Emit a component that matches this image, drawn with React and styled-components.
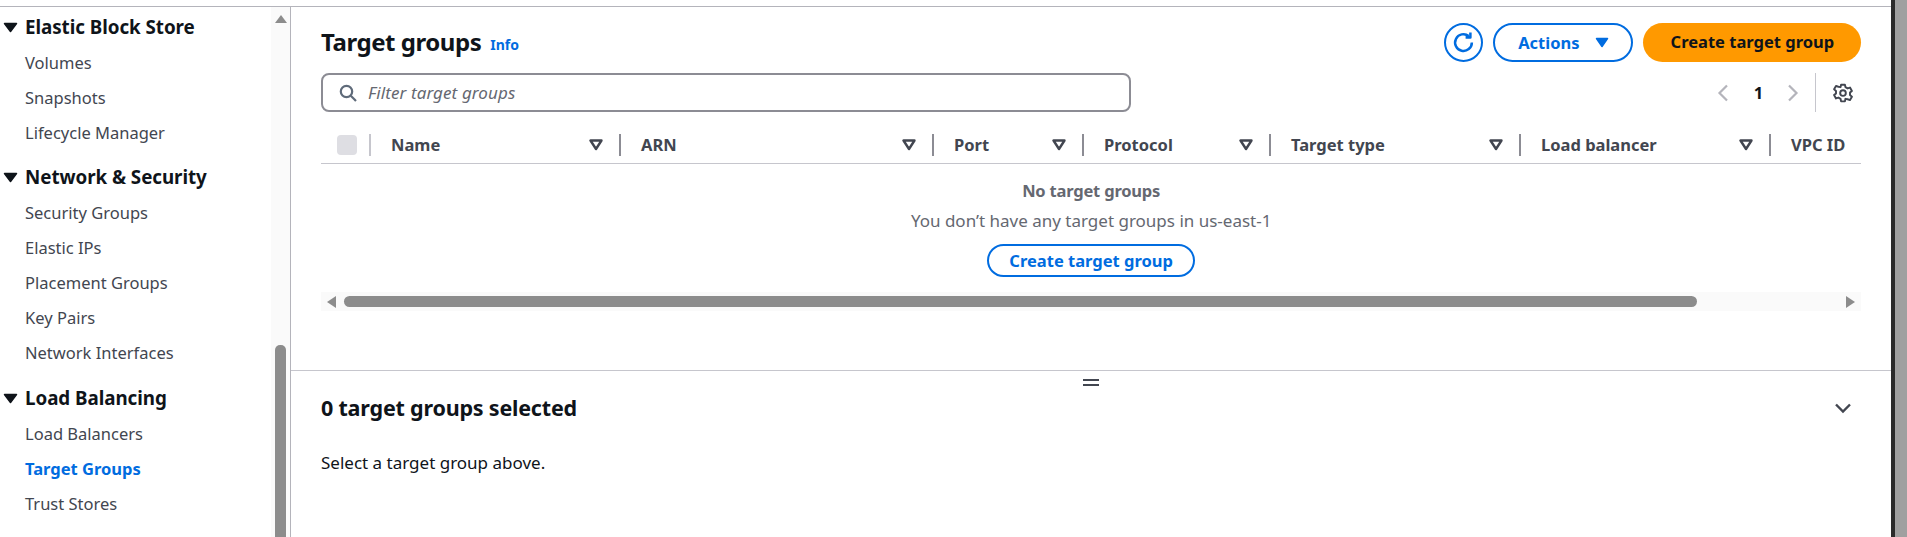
import React from "react";
import styled, { createGlobalStyle } from "styled-components";

const Global = createGlobalStyle`
  html, body { margin: 0; padding: 0; background: #fff; overflow: hidden; }
  * { box-sizing: border-box; }
  body { font-family: "Noto Sans", "Open Sans", Arial, sans-serif; color: #0f141a; }
`;

const Page = styled.div`
  display: flex;
  width: 1907px;
  height: 537px;
  overflow: hidden;
`;
const Workspace = styled.div`
  flex: 1;
  display: flex;
  flex-direction: column;
  padding-top: 6px;
`;
const Body = styled.div`
  flex: 1;
  display: flex;
  min-height: 0;
  border-top: 1px solid #b4b4bb;
`;
const WindowEdge = styled.div`
  width: 16px;
  background: #a0a0a0;
  border-left: 4px solid #2b2b2b;
`;

const Sidebar = styled.nav`
  width: 291px;
  flex: none;
  display: flex;
  border-right: 1px solid #b4b4bb;
`;
const NavList = styled.div`
  flex: 1;
  overflow: hidden;
`;
const NavHeading = styled.div`
  display: flex;
  align-items: center;
  height: 36px;
  margin-top: ${(p) => p.$gap}px;
  padding-left: 3px;
  font-size: 18.8px;
  font-weight: 700;
  letter-spacing: -0.05px;
  color: #0f141a;
  svg { margin-right: 7px; }
`;
const NavItem = styled.div`
  height: 35px;
  line-height: 35px;
  padding-left: 25px;
  font-size: 16.5px;
  font-weight: ${(p) => (p.$active ? 700 : 400)};
  color: ${(p) => (p.$active ? "#006ce0" : "#424650")};
`;
const NavScroll = styled.div`
  width: 19px;
  flex: none;
  background: #fafafa;
  display: flex;
  flex-direction: column;
  align-items: center;
  padding-top: 7px;
`;
const NavThumb = styled.div`
  width: 11px;
  flex: 1;
  margin-top: 321px;
  background: #8c8c8c;
  border-radius: 5px 5px 0 0;
`;

const Main = styled.main`
  flex: 1;
  min-width: 0;
  display: flex;
  flex-direction: column;
`;
const TopPane = styled.section`
  height: 364px;
  flex: none;
  padding: 16px 30px 0 30px;
  border-bottom: 1px solid #c6c6cd;
`;
const HeaderRow = styled.div`
  display: flex;
  align-items: center;
  height: 39px;
`;
const Title = styled.h1`
  margin: 0 0 2px;
  font-size: 24px;
  font-weight: 700;
  letter-spacing: -0.45px;
  color: #0f141a;
`;
const InfoLink = styled.a`
  margin: 4px 0 0 9px;
  font-size: 14px;
  font-weight: 700;
  color: #006ce0;
`;
const Actions = styled.div`
  margin-left: auto;
  display: flex;
  gap: 10px;
`;
const IconButton = styled.button`
  width: 39px;
  height: 39px;
  padding: 0;
  display: flex;
  align-items: center;
  justify-content: center;
  background: #fff;
  border: 2px solid #006ce0;
  border-radius: 50%;
  color: #006ce0;
`;
const OutlineButton = styled.button`
  width: ${(p) => p.$width}px;
  height: ${(p) => p.$height}px;
  padding: 0 0 1px;
  display: flex;
  align-items: center;
  justify-content: center;
  gap: 15px;
  background: #fff;
  border: 2px solid #006ce0;
  border-radius: 20px;
  font-family: inherit;
  font-size: 16.5px;
  font-weight: 700;
  color: #006ce0;
`;
const PrimaryButton = styled.button`
  width: 218px;
  height: 39px;
  padding: 0 0 2px;
  background: #ff9900;
  border: none;
  border-radius: 20px;
  font-family: inherit;
  font-size: 16.5px;
  font-weight: 700;
  color: #0f141a;
`;
const FilterRow = styled.div`
  display: flex;
  align-items: center;
  margin-top: 11px;
  height: 39px;
`;
const FilterBox = styled.div`
  width: 810px;
  height: 39px;
  display: flex;
  align-items: center;
  gap: 11px;
  padding-left: 16px;
  border: 2px solid #8c8c94;
  border-radius: 8px;
  color: #656871;
`;
const FilterText = styled.span`
  font-size: 17px;
  font-style: italic;
  letter-spacing: 0.1px;
  color: #656871;
`;
const Pager = styled.div`
  margin-left: auto;
  display: flex;
  align-items: center;
  height: 39px;
  padding-right: 8px;
`;
const PageNumber = styled.span`
  width: 58px;
  text-align: center;
  font-size: 16.5px;
  font-weight: 700;
  color: #0f141a;
`;
const PagerDivider = styled.span`
  width: 1px;
  height: 39px;
  margin: 0 17px 0 16px;
  background: #c6c6cd;
`;
const TableHeader = styled.div`
  display: grid;
  grid-template-columns: 50px 250px 313px 150px 187px 250px 250px 1fr;
  align-items: center;
  height: 52px;
  padding-top: 14px;
  border-bottom: 1px solid #c6c6cd;
`;
const CheckCell = styled.div`
  height: 22px;
  display: flex;
  align-items: center;
  justify-content: space-between;
  padding-left: 16px;
  border-right: 2px solid #c6c6cd;
`;
const FakeCheck = styled.span`
  width: 20px;
  height: 20px;
  border-radius: 4px;
  background: #dedee3;
`;
const HeadCell = styled.div`
  height: 22px;
  display: flex;
  align-items: center;
  justify-content: space-between;
  padding: 0 16px 0 20px;
  font-size: 16.5px;
  font-weight: 700;
  white-space: nowrap;
  color: #424650;
  border-right: ${(p) => (p.$last ? "none" : "2px solid #8c8c94")};
`;
const EmptyState = styled.div`
  display: flex;
  flex-direction: column;
  align-items: center;
  padding-top: 15px;
`;
const EmptyTitle = styled.div`
  height: 24px;
  line-height: 24px;
  font-size: 16.5px;
  font-weight: 700;
  letter-spacing: -0.2px;
  color: #656871;
`;
const EmptyText = styled.div`
  height: 24px;
  line-height: 24px;
  margin: 6px 0 11px;
  font-size: 17px;
  color: #656871;
`;
const HScroll = styled.div`
  display: flex;
  align-items: center;
  height: 19px;
  margin-top: 15px;
  padding: 0 6px;
  background: #fafafa;
`;
const HThumb = styled.div`
  width: 1353px;
  height: 11px;
  margin: 0 auto 0 8px;
  background: #8c8c8c;
  border-radius: 6px;
`;

const DetailPane = styled.section`
  position: relative;
  flex: 1;
  padding: 0 30px 0 30px;
`;
const SplitHandle = styled.div`
  position: absolute;
  top: 8px;
  left: 792px;
  width: 16px;
  height: 7px;
  border-top: 2px solid #424650;
  border-bottom: 2px solid #424650;
`;
const DetailHeader = styled.div`
  display: flex;
  align-items: center;
  justify-content: space-between;
  padding: 19px 9px 0 0;
  height: 54px;
`;
const DetailTitle = styled.h2`
  margin: 0;
  font-size: 21.5px;
  font-weight: 700;
  letter-spacing: -0.2px;
  color: #0f141a;
`;
const DetailText = styled.p`
  margin: 0;
  padding-top: 26px;
  font-size: 17px;
  color: #0f141a;
`;

const Caret = () => (
  <svg width="15" height="11" viewBox="0 0 15 11"><path d="M1.5 1.5h12L7.5 9.5z" fill="#0f141a" stroke="#0f141a" strokeWidth="1.5" strokeLinejoin="round" /></svg>
);
const SortIcon = () => (
  <svg width="14" height="12" viewBox="0 0 14 12"><path d="M1.5 1.5h11L7 10z" fill="none" stroke="#424650" strokeWidth="2.4" strokeLinejoin="round" /></svg>
);
const ActionsCaret = () => (
  <svg width="14" height="11" viewBox="0 0 14 11"><path d="M1.5 1.5h11L7 9.5z" fill="#006ce0" stroke="#006ce0" strokeWidth="1.5" strokeLinejoin="round" /></svg>
);
const RefreshIcon = () => (
  <svg width="23" height="23" viewBox="0 0 22 22" fill="none" stroke="#006ce0" strokeWidth="2.4" strokeLinejoin="round"><path d="M19 11a8 8 0 1 1-3-6.2" /><path d="M17.6 1.5v4.6H13" /></svg>
);
const SearchIcon = () => (
  <svg width="18" height="18" viewBox="0 0 18 18" fill="none" stroke="#5f6b7a" strokeWidth="2.2"><circle cx="7.5" cy="7.5" r="5.7" /><path d="M11.8 11.8L17 17" /></svg>
);
const ChevLeft = () => (
  <svg width="12" height="18" viewBox="0 0 12 18" fill="none" stroke="#b4b4bb" strokeWidth="2.2"><path d="M10 1.5L2.5 9l7.5 7.5" /></svg>
);
const ChevRight = () => (
  <svg width="12" height="18" viewBox="0 0 12 18" fill="none" stroke="#b4b4bb" strokeWidth="2.2"><path d="M2 1.5L9.5 9 2 16.5" /></svg>
);
const GearIcon = () => (
  <svg width="20" height="20" viewBox="0 0 24 24" fill="none" stroke="#424650" strokeWidth="2.3" strokeLinejoin="round"><path d="M9.7 2h4.6l.6 3 2.6 1.5 2.9-1 2.3 4-2.3 2v3l2.3 2-2.3 4-2.9-1L14.9 19l-.6 3H9.7l-.6-3-2.6-1.5-2.9 1-2.3-4 2.3-2v-3l-2.3-2 2.3-4 2.9 1L9.1 5z" /><circle cx="12" cy="12" r="3.4" /></svg>
);
const ChevDown = () => (
  <svg width="18" height="12" viewBox="0 0 18 12" fill="none" stroke="#424650" strokeWidth="2.4"><path d="M2 2.5l7 7 7-7" /></svg>
);
const ScrollArrow = ({ dir }) => {
  const d = { up: "M6 1l6 8H0z", left: "M9 0v12L0 6z", right: "M0 0v12l9-6z" }[dir];
  const box = dir === "up" ? [12, 10] : [9, 12];
  return <svg width={box[0]} height={box[1]} viewBox={`0 0 ${box[0]} ${box[1]}`}><path d={d} fill="#8c8c8c" /></svg>;
};

const nav = [
  { title: "Elastic Block Store", gap: 2, items: ["Volumes", "Snapshots", "Lifecycle Manager"] },
  { title: "Network & Security", gap: 9, items: ["Security Groups", "Elastic IPs", "Placement Groups", "Key Pairs", "Network Interfaces"] },
  { title: "Load Balancing", gap: 10, items: ["Load Balancers", "Target Groups", "Trust Stores"] },
];
const columns = ["Name", "ARN", "Port", "Protocol", "Target type", "Load balancer"];

export default function App() {
  return (
    <>
      <Global />
      <Page>
        <Workspace>
          <Body>
            <Sidebar>
              <NavList>
                {nav.map((group) => (
                  <React.Fragment key={group.title}>
                    <NavHeading $gap={group.gap}><Caret />{group.title}</NavHeading>
                    {group.items.map((item) => (
                      <NavItem key={item} $active={item === "Target Groups"}>{item}</NavItem>
                    ))}
                  </React.Fragment>
                ))}
              </NavList>
              <NavScroll>
                <ScrollArrow dir="up" />
                <NavThumb />
              </NavScroll>
            </Sidebar>
            <Main>
              <TopPane>
                <HeaderRow>
                  <Title>Target groups</Title>
                  <InfoLink>Info</InfoLink>
                  <Actions>
                    <IconButton aria-label="Refresh"><RefreshIcon /></IconButton>
                    <OutlineButton $width={140} $height={39}>Actions<ActionsCaret /></OutlineButton>
                    <PrimaryButton>Create target group</PrimaryButton>
                  </Actions>
                </HeaderRow>
                <FilterRow>
                  <FilterBox><SearchIcon /><FilterText>Filter target groups</FilterText></FilterBox>
                  <Pager>
                    <ChevLeft />
                    <PageNumber>1</PageNumber>
                    <ChevRight />
                    <PagerDivider />
                    <GearIcon />
                  </Pager>
                </FilterRow>
                <TableHeader>
                  <CheckCell><FakeCheck /></CheckCell>
                  {columns.map((c) => (
                    <HeadCell key={c}>{c}<SortIcon /></HeadCell>
                  ))}
                  <HeadCell $last>VPC ID</HeadCell>
                </TableHeader>
                <EmptyState>
                  <EmptyTitle>No target groups</EmptyTitle>
                  <EmptyText>You don’t have any target groups in us-east-1</EmptyText>
                  <OutlineButton $width={208} $height={33}>Create target group</OutlineButton>
                </EmptyState>
                <HScroll>
                  <ScrollArrow dir="left" />
                  <HThumb />
                  <ScrollArrow dir="right" />
                </HScroll>
              </TopPane>
              <DetailPane>
                <SplitHandle />
                <DetailHeader>
                  <DetailTitle>0 target groups selected</DetailTitle>
                  <ChevDown />
                </DetailHeader>
                <DetailText>Select a target group above.</DetailText>
              </DetailPane>
            </Main>
          </Body>
        </Workspace>
        <WindowEdge />
      </Page>
    </>
  );
}
